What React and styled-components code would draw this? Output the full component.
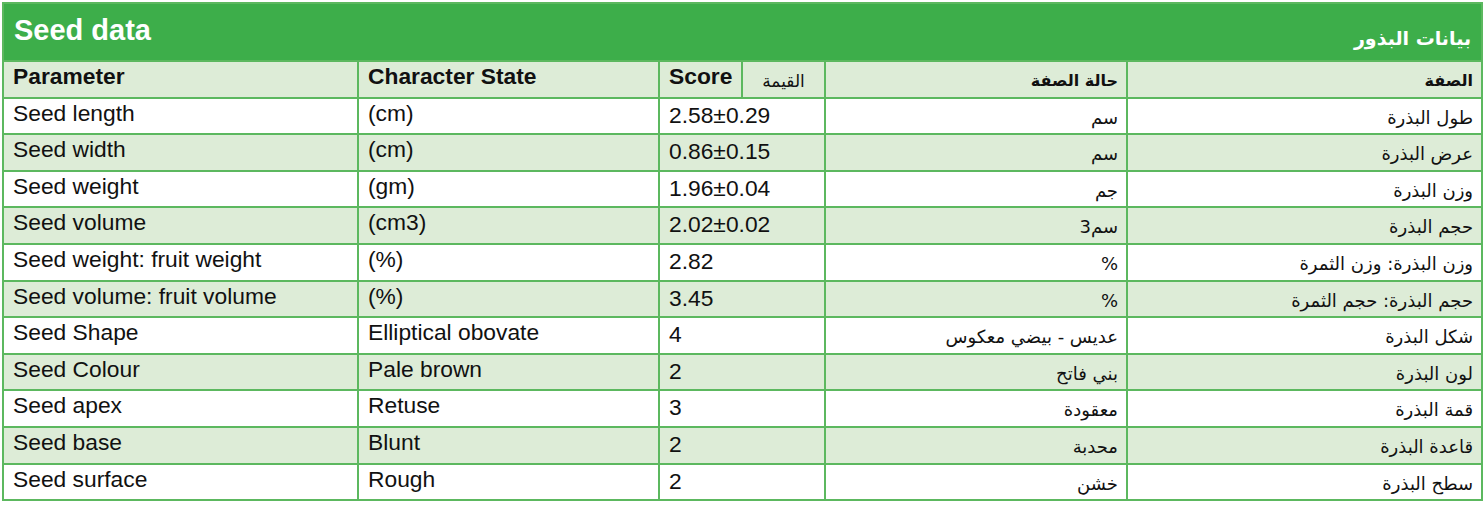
import styled, { createGlobalStyle } from 'styled-components';

const Global = createGlobalStyle`
  body {
    margin: 0;
    background: #ffffff;
  }
`;

const Wrap = styled.div`
  padding: 2px 2px 0 2px;
  width: 1479px;
`;

const Table = styled.table`
  width: 1479px;
  border-collapse: collapse;
  table-layout: fixed;
  font-family: "Liberation Sans", Arial, sans-serif;
  color: #111;
`;

const TitleCell = styled.th`
  background: #3dae4a;
  color: #fff;
  height: 56px;
  border: 2px solid #5cb85f;
  padding: 0 10px;
  vertical-align: middle;
`;

const TitleBar = styled.div`
  display: flex;
  justify-content: space-between;
  align-items: center;
`;

const TitleEn = styled.span`
  font-size: 29px;
  font-weight: bold;
  margin-top: -4px;
`;

const TitleAr = styled.span`
  font-family: "DejaVu Sans", "Noto Sans", sans-serif;
  font-size: 19px;
  font-weight: bold;
  margin-top: 12px;
  direction: rtl;
`;

const Cell = styled.td`
  border: 2px solid #5cb85f;
  background: ${p => (p.$tint ? '#ddecd7' : '#ffffff')};
  padding: ${p => (p.$ar ? '5px 8px 1.6px 8px' : '2px 10px 7.6px 9px')};
  line-height: ${p => (p.$ar ? '28px' : '25px')};
  font-size: ${p => (p.$ar ? '18px' : '22.8px')};
  font-weight: ${p => (p.$bold ? 'bold' : 'normal')};
  font-family: ${p => (p.$ar ? '"DejaVu Sans", "Noto Sans", sans-serif' : 'inherit')};
  text-align: ${p => (p.$ar ? 'right' : 'left')};
  direction: ${p => (p.$ar ? 'rtl' : 'ltr')};
  vertical-align: ${p => (p.$ar ? 'bottom' : 'top')};
  white-space: nowrap;
  overflow: hidden;
`;

const HeadCell = styled(Cell)`
  text-align: ${p => (p.$center ? 'center' : p.$ar ? 'right' : 'left')};
  font-size: ${p => (p.$ar ? '16px' : '22.8px')};
`;

const ScoreHead = styled(HeadCell)`
  font-size: 17px;
`;

const ScoreCell = styled(Cell)`
  padding-top: 4px;
  padding-bottom: 5.6px;
`;

const rows = [
  ['Seed length', '(cm)', '2.58±0.29', 'سم', 'طول البذرة'],
  ['Seed width', '(cm)', '0.86±0.15', 'سم', 'عرض البذرة'],
  ['Seed weight', '(gm)', '1.96±0.04', 'جم', 'وزن البذرة'],
  ['Seed volume', '(cm3)', '2.02±0.02', 'سم3', 'حجم البذرة'],
  ['Seed weight: fruit weight', '(%)', '2.82', '%', 'وزن البذرة: وزن الثمرة'],
  ['Seed volume: fruit volume', '(%)', '3.45', '%', 'حجم البذرة: حجم الثمرة'],
  ['Seed Shape', 'Elliptical obovate', '4', 'عديس - بيضي معكوس', 'شكل البذرة'],
  ['Seed Colour', 'Pale brown', '2', 'بني فاتح', 'لون البذرة'],
  ['Seed apex', 'Retuse', '3', 'معقودة', 'قمة البذرة'],
  ['Seed base', 'Blunt', '2', 'محدبة', 'قاعدة البذرة'],
  ['Seed surface', 'Rough', '2', 'خشن', 'سطح البذرة'],
];

export default function App() {
  return (
    <Wrap>
      <Global />
      <Table>
        <colgroup>
          <col style={{ width: 355 }} />
          <col style={{ width: 301 }} />
          <col style={{ width: 83 }} />
          <col style={{ width: 83 }} />
          <col style={{ width: 302 }} />
          <col style={{ width: 355 }} />
        </colgroup>
        <thead>
          <tr>
            <TitleCell colSpan={6}>
              <TitleBar>
                <TitleEn>Seed data</TitleEn>
                <TitleAr>بيانات البذور</TitleAr>
              </TitleBar>
            </TitleCell>
          </tr>
          <tr>
            <HeadCell as="th" $tint $bold>Parameter</HeadCell>
            <HeadCell as="th" $tint $bold>Character State</HeadCell>
            <HeadCell as="th" $tint $bold>Score</HeadCell>
            <ScoreHead as="th" $tint $ar $center>القيمة</ScoreHead>
            <HeadCell as="th" $tint $bold $ar>حالة الصفة</HeadCell>
            <HeadCell as="th" $tint $bold $ar>الصفة</HeadCell>
          </tr>
        </thead>
        <tbody>
          {rows.map((r, i) => {
            const tint = i % 2 === 1;
            return (
              <tr key={r[0]}>
                <Cell $tint={tint}>{r[0]}</Cell>
                <Cell $tint={tint}>{r[1]}</Cell>
                <ScoreCell $tint={tint} colSpan={2}>{r[2]}</ScoreCell>
                <Cell $tint={tint} $ar>{r[3]}</Cell>
                <Cell $tint={tint} $ar>{r[4]}</Cell>
              </tr>
            );
          })}
        </tbody>
      </Table>
    </Wrap>
  );
}
